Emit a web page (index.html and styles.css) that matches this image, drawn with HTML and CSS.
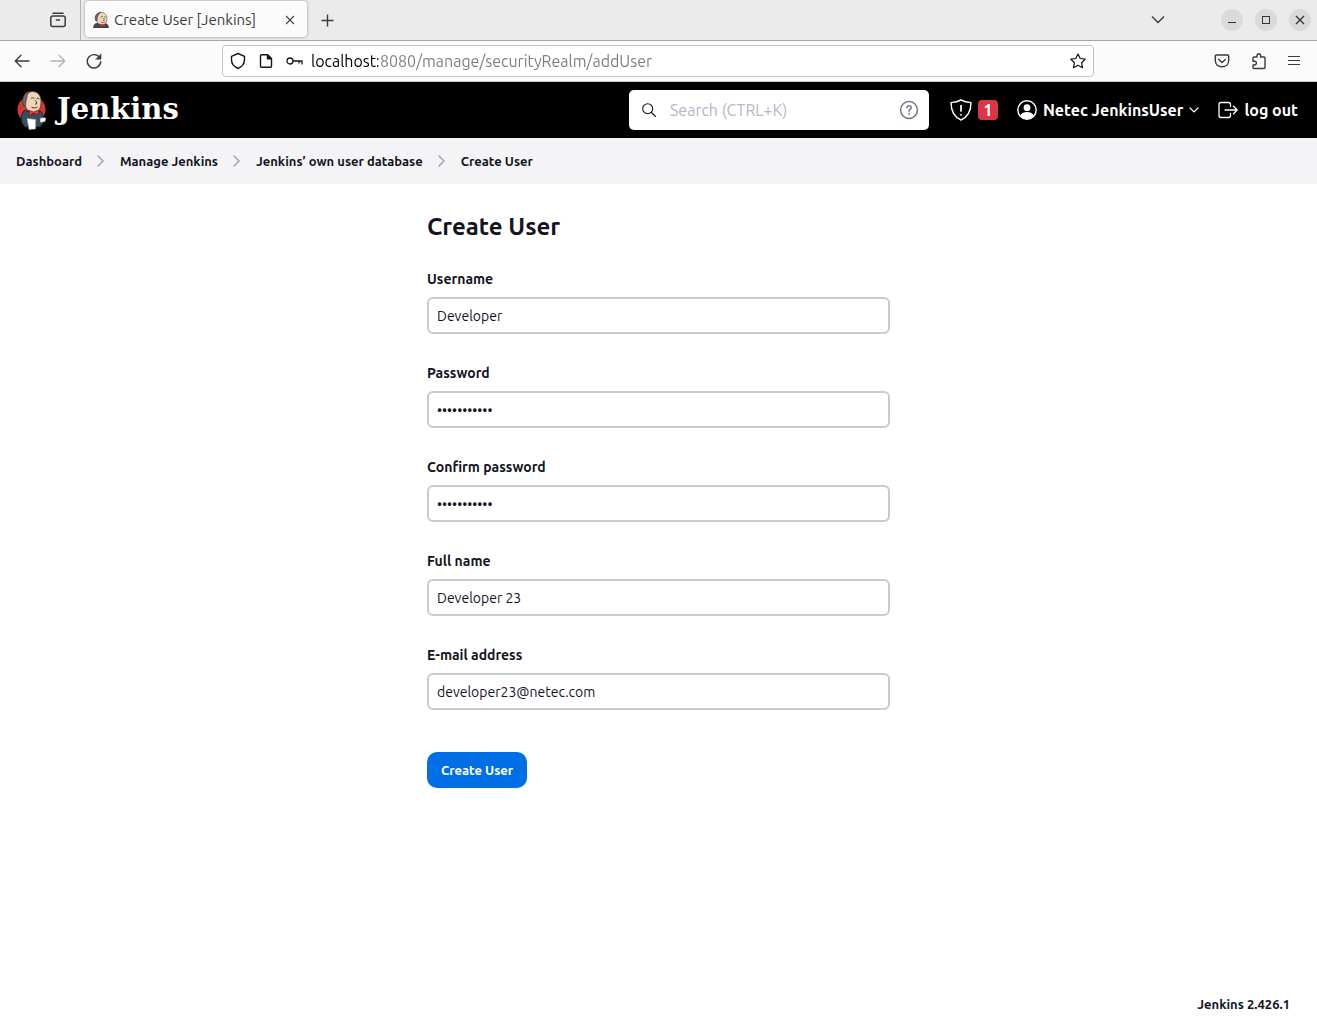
FILE: index.html
```html
<!DOCTYPE html>
<html lang="en">
<head>
<meta charset="utf-8">
<meta name="viewport" content="width=device-width, initial-scale=1">
<title>Create User [Jenkins]</title>
<link rel="stylesheet" href="styles.css">
</head>
<body>
<svg class="defs" aria-hidden="true">
  <symbol id="butler-bust" viewBox="0 0 32 32">
    <path d="M1 32c0-6 3-9 8-10l8 4 8-3c4 1 6 4 6 9z" fill="#335061" stroke="#1b2a33"/>
    <path d="M6 14C4 7 8 2 15 1c8-1 13 4 13 12 0 7-3 13-9 13-6 0-11-4-11-8-1 0-2-2-2-4z" fill="#f0d6b7" stroke="#4a3b33"/>
    <path d="M5 17C3 8 7 1 16 1c-4 2-6 4-6 7-2 2-1 6-2 10z" fill="#6d6b6d" stroke="#332c28"/>
    <path d="M15 10c2-2 4-1 5 0M22 10c2-1 3-1 4 1M21 12l2 4-3 1M16 20c3 2 6 1 8-1" fill="none" stroke="#4a3b33" stroke-width="1.3"/>
    <path d="M13 24l6 2 6-2v6l-6-2-6 3z" fill="#d33833" stroke="#811"/>
  </symbol>
  <symbol id="chevron-right" viewBox="0 0 12 12">
    <path d="M3 1l5 5-5 5" fill="none" stroke="currentColor" stroke-width="1.6" stroke-linecap="round" stroke-linejoin="round"/>
  </symbol>
</svg>

<div class="browser">
  <div class="tabstrip">
    <button class="icon-btn history" aria-label="Recent browsing">
      <svg width="18" height="18" viewBox="0 0 18 18" fill="none" stroke="#3b3b3e" stroke-width="1.5" stroke-linecap="round"><path d="M4 2.2h10"/><rect x="1.8" y="5" width="14.4" height="10.6" rx="2"/><path d="M7.500 9h3"/></svg>
    </button>
    <div class="tab">
      <svg class="favicon" width="16" height="16"><use href="#butler-bust"/></svg>
      <span class="tab-title">Create User [Jenkins]</span>
      <button class="icon-btn" aria-label="Close tab">
        <svg width="10" height="10" viewBox="0 0 10 10" stroke="#444" stroke-width="1.1"><path d="M1 1l8 8M9 1L1 9"/></svg>
      </button>
    </div>
    <button class="icon-btn new-tab" aria-label="New tab">
      <svg width="13" height="13" viewBox="0 0 13 13" stroke="#3b3b3e" stroke-width="1.4"><path d="M6.5 0.5v12M0.5 6.5h12"/></svg>
    </button>
    <div class="window-controls">
      <button class="icon-btn tab-list" aria-label="List all tabs">
        <svg width="14" height="8" viewBox="0 0 14 8" fill="none" stroke="#3b3b3e" stroke-width="1.4"><path d="M1 0.500l6 6 6-6"/></svg>
      </button>
      <button class="window-btn" aria-label="Minimize"><svg width="10" height="10" viewBox="0 0 10 10" stroke="#333"><path d="M1 7.5h8"/></svg></button>
      <button class="window-btn" aria-label="Maximize"><svg width="10" height="10" viewBox="0 0 10 10" fill="none" stroke="#333"><rect x="1.5" y="1.5" width="7" height="7"/></svg></button>
      <button class="window-btn" aria-label="Close"><svg width="10" height="10" viewBox="0 0 10 10" stroke="#333" stroke-width="1.3"><path d="M1 1l8 8M9 1L1 9"/></svg></button>
    </div>
  </div>

  <div class="toolbar">
    <div class="nav-buttons">
      <button class="icon-btn" aria-label="Back"><svg width="16" height="14" viewBox="0 0 16 14" fill="none" stroke="#3b3b3e" stroke-width="1.4" stroke-linecap="round" stroke-linejoin="round"><path d="M15 7H1.5M7 1.3L1.3 7 7 12.7"/></svg></button>
      <button class="icon-btn" aria-label="Forward" disabled><svg width="16" height="14" viewBox="0 0 16 14" fill="none" stroke="#b5b5b7" stroke-width="1.4" stroke-linecap="round" stroke-linejoin="round"><path d="M1 7h13.5M9 1.3L14.7 7 9 12.7"/></svg></button>
      <button class="icon-btn" aria-label="Reload"><svg width="16" height="16" viewBox="0 0 16 16" fill="none" stroke="#3b3b3e" stroke-width="1.4" stroke-linecap="round"><path d="M13.7 4.8A6.7 6.7 0 1 0 14.7 8.6"/><path d="M15 1.2v5h-5z" fill="#3b3b3e" stroke-width=".6"/></svg></button>
    </div>
    <div class="urlbar">
      <svg width="16" height="18" viewBox="0 0 16 18" fill="none" stroke="#15141a" stroke-width="1.4" stroke-linejoin="round"><path d="M8 1.5l6.5 2.800v3.500c0 4-2.500 7-6.500 8.700-4-1.700-6.500-4.700-6.500-8.700V4.300z"/></svg>
      <svg width="16" height="16" viewBox="0 0 16 16" fill="none" stroke="#15141a" stroke-width="1.4" stroke-linejoin="round"><path d="M3.500 1.700h6l4 4v7.600q0 1-1 1h-9q-1 0-1-1V2.700q0-1 1-1z"/><path d="M9.500 1.700v4h4z" fill="#15141a"/></svg>
      <svg width="18" height="12" viewBox="0 0 18 12" fill="none" stroke="#15141a" stroke-width="1.3"><circle cx="4" cy="6" r="3"/><path d="M7 6h9v3.500M13 6v2.500"/></svg>
      <input class="url" type="text" aria-label="Address" value="localhost:8080/manage/securityRealm/addUser">
      <button class="icon-btn" aria-label="Bookmark this page"><svg width="16" height="16" viewBox="0 0 16 16" fill="none" stroke="#15141a" stroke-width="1.2" stroke-linejoin="round"><path d="M8 .9l2.2 4.6 5 .7-3.600 3.500.9 5L8 12.300l-4.500 2.400.9-5L.8 6.200l5-.7z"/></svg></button>
    </div>
    <div class="tool-buttons">
      <button class="icon-btn" aria-label="Save to Pocket"><svg width="16" height="16" viewBox="0 0 16 16" fill="none" stroke="#3b3b3e" stroke-width="1.4" stroke-linecap="round" stroke-linejoin="round"><path d="M2.300 2h11.400q1 0 1 1v4.500c0 4-3 6.300-6.700 6.300S1.300 11.500 1.300 7.500V3q0-1 1-1z"/><path d="M4.700 6.500L8 9.500l3.300-3"/></svg></button>
      <button class="icon-btn" aria-label="Extensions"><svg width="16" height="18" viewBox="0 0 16 18" fill="none" stroke="#3b3b3e" stroke-width="1.4" stroke-linejoin="round"><path d="M2 8V6q0-1 1-1h3V3.500a1.800 1.800 0 0 1 3.600 0V5H13q1 0 1 1v9.500q0 1-1 1H3q-1 0-1-1V13h1.500a1.900 1.900 0 0 0 0-3.800H2z"/></svg></button>
      <button class="icon-btn" aria-label="Menu"><svg width="12" height="12" viewBox="0 0 12 12" stroke="#3b3b3e" stroke-width="1.2"><path d="M0 1.500h12M0 5.500h12M0 9.500h12"/></svg></button>
    </div>
  </div>
</div>

<header class="header">
  <a class="logo" href="#">
    <svg width="32" height="40" viewBox="0 0 32 40" aria-hidden="true">
      <ellipse cx="15.500" cy="19.500" rx="14" ry="13.500" fill="#d33833"/>
      <path d="M6 33c-1-5-1-10 3-13l8 4 7-3c3 2 4 6 3 12l-3 4H9z" fill="#335061" stroke="#16232b"/>
      <path d="M8 12C7 5 11 1.500 16 1.500c6 0 9 4 9 10 0 6-2 11-6.500 11S10 19 9.500 16C8.500 16 8 14 8 12z" fill="#f0d6b7" stroke="#4a3b33" stroke-width=".8"/>
      <path d="M7.500 16C5 8 8 1 16 1.200c-4 1.300-5 3.300-5 6-1 2-1 5-1.500 8.500z" fill="#6d6b6d" stroke="#332c28" stroke-width=".7"/>
      <path d="M15 8.500c1-1 2.500-1 3.500 0M20.500 9c1-1 2-1 3 0M19.500 10.500l1.500 3-2 .8M15.500 17c2 1.500 4.500 1 6 0" fill="none" stroke="#4a3b33"/>
      <path d="M13 20.500l4.500 1.500 5-2v5l-5-2-4 3z" fill="#ef3d3a" stroke="#7d1616" stroke-width=".7"/>
      <path d="M24 28l5-.5c1.500 1 1 4-1 4.500l-4 .5z" fill="#fff" stroke="#555" stroke-width=".6"/>
      <path d="M11 28.500l9 1c-1 3 0 6-.5 9.500l-6.500.5c-.5-4-1.500-7-2-11z" fill="#fff" stroke="#999" stroke-width=".6"/>
    </svg>
    <span class="wordmark">Jenkins</span>
  </a>
  <label class="search">
    <svg width="16" height="16" viewBox="0 0 16 16" fill="none" stroke="#14141f" stroke-width="1.1" stroke-linecap="round" aria-hidden="true"><circle cx="6.700" cy="6.700" r="5"/><path d="M10.500 10.500l4 4"/></svg>
    <input type="search" placeholder="Search (CTRL+K)" aria-label="Search">
    <svg width="20" height="20" viewBox="0 0 20 20" fill="none" stroke="#73738c" stroke-width="1.5" stroke-linecap="round" aria-hidden="true"><circle cx="10" cy="10" r="8.400"/><path d="M7.800 7.800c.1-1.500 1-2 2.200-2s2.200.7 2.200 1.900c0 1.700-2.200 1.700-2.200 3.500"/><circle cx="10" cy="14" r=".4" fill="#73738c" stroke-width="1"/></svg>
  </label>
  <nav class="account">
    <a class="alerts" href="#" aria-label="1 security warning">
      <svg width="22" height="22" viewBox="0 0 22 22" fill="none" stroke="#fff" stroke-width="1.4" stroke-linecap="round" stroke-linejoin="round"><path d="M11 1c3 1.500 6.500 2.300 10 2.600C21 11 19 17.500 11 21 3 17.500 1 11 1 3.600 4.500 3.300 8 2.500 11 1z"/><path d="M11 6.500v5.500M11 15.500v.3" stroke-width="1.700"/></svg>
      <span class="badge">1</span>
    </a>
    <a class="user" href="#">
      <svg width="20" height="20" viewBox="0 0 20 20"><circle cx="10" cy="10" r="9.200" fill="none" stroke="#fff" stroke-width="1.4"/><circle cx="10" cy="7.700" r="3.400" fill="#fff"/><path d="M3.300 15.500C4.500 13 7 12 10 12s5.500 1 6.700 3.500A9 9 0 0 1 10 19a9 9 0 0 1-6.700-3.500z" fill="#fff"/></svg>
      <span>Netec JenkinsUser</span>
      <svg width="10" height="6" viewBox="0 0 10 6" fill="none" stroke="#fff" stroke-width="1.2" stroke-linecap="round"><path d="M1 1l4 4 4-4"/></svg>
    </a>
    <a class="logout" href="#">
      <svg width="20" height="18" viewBox="0 0 20 18" fill="none" stroke="#fff" stroke-width="1.3" stroke-linecap="round" stroke-linejoin="round"><path d="M12.500 5.500V3.500q0-2-2-2H3q-2 0-2 2v11q0 2 2 2h7.500q2 0 2-2v-2M7 9h12M15.500 5.200L19.200 9l-3.700 3.800"/></svg>
      <span>log out</span>
    </a>
  </nav>
</header>

<nav class="breadcrumbs" aria-label="Breadcrumb">
  <a href="#">Dashboard</a>
  <svg width="12" height="12"><use href="#chevron-right"/></svg>
  <a href="#">Manage Jenkins</a>
  <svg width="12" height="12"><use href="#chevron-right"/></svg>
  <a href="#">Jenkins’ own user database</a>
  <svg width="12" height="12"><use href="#chevron-right"/></svg>
  <a href="#">Create User</a>
</nav>

<main class="main">
  <h1>Create User</h1>
  <form class="form">
    <div class="field"><label for="username">Username</label><input id="username" type="text" value="Developer"></div>
    <div class="field"><label for="password">Password</label><input id="password" type="password" value="developer23"></div>
    <div class="field"><label for="confirm">Confirm password</label><input id="confirm" type="password" value="developer23"></div>
    <div class="field"><label for="fullname">Full name</label><input id="fullname" type="text" value="Developer 23"></div>
    <div class="field"><label for="email">E-mail address</label><input id="email" type="text" value="developer23@netec.com"></div>
    <button class="submit" type="submit">Create User</button>
  </form>
</main>

<footer class="footer"><a href="#">Jenkins 2.426.1</a></footer>
</body>
</html>
```
FILE: styles.css
```css
*, *::before, *::after { box-sizing: border-box; }

body {
  margin: 0;
  min-height: 100vh;
  display: flex;
  flex-direction: column;
  background: #fff;
  color: #14141f;
  font-family: Ubuntu, "Noto Sans", "Open Sans", sans-serif;
  font-size: 14px;
  line-height: 20px;
}

a { color: inherit; text-decoration: none; }
button, input { font: inherit; color: inherit; }
svg { flex: none; display: block; }
.defs { position: absolute; width: 0; height: 0; }

.icon-btn {
  display: flex;
  padding: 0;
  border: 0;
  background: none;
}

/* Browser chrome */
.tabstrip {
  display: flex;
  align-items: center;
  height: 41px;
  background: #ebebeb;
  border-bottom: 1px solid #a5a5a7;
}
.history {
  align-self: stretch;
  align-items: center;
  width: 81px;
  padding-left: 49px;
  border-right: 1px solid #b4b4b6;
}
.tab {
  display: flex;
  align-items: center;
  width: 222px;
  height: 36px;
  margin: 0 14px 2px 4px;
  padding: 2px 12px 0 8px;
  border-radius: 4px;
  background: #fbfbfb;
  box-shadow: 0 0 3px rgba(0, 0, 0, .4);
  color: #3b3b3e;
  font-size: 15px;
}
.favicon { margin-right: 5px; }
.tab-title { flex: 1; white-space: nowrap; }
.window-controls {
  display: flex;
  align-items: center;
  gap: 12px;
  margin-left: auto;
  padding-right: 6px;
}
.tab-list { margin-right: 44px; }
.window-btn {
  display: grid;
  place-items: center;
  width: 22px;
  height: 22px;
  padding: 0;
  border: 0;
  border-radius: 50%;
  background: #dadada;
}
.toolbar {
  display: flex;
  align-items: center;
  height: 41px;
  padding: 0 17px 0 14px;
  background: #fbfbfb;
  border-bottom: 1px solid #ccc;
}
.nav-buttons { display: flex; align-items: center; gap: 20px; }
.urlbar {
  flex: 1;
  display: flex;
  align-items: center;
  gap: 12px;
  height: 32px;
  margin: 0 120px;
  padding: 0 7px;
  border: 1px solid #c4c4c6;
  border-radius: 4px;
  background: #fff;
}
.url {
  flex: 1;
  min-width: 0;
  margin-left: -5px;
  padding: 0;
  border: 0;
  font-size: 16px;
  color: transparent;
  background: linear-gradient(90deg, #000 67px, #7b7b80 67px);
  background-clip: text;
}
.tool-buttons { display: flex; align-items: center; gap: 21px; }

/* Jenkins header */
.header {
  display: flex;
  align-items: center;
  height: 56px;
  padding: 0 19px 0 16px;
  background: #000;
  color: #fff;
}
.logo { display: flex; align-items: center; gap: 9px; }
.wordmark {
  padding-bottom: 2px;
  font: bold 29px/36px "DejaVu Serif", serif;
}
.search {
  display: flex;
  align-items: center;
  width: 300px;
  height: 40px;
  margin-left: auto;
  padding: 0 10px 0 12px;
  border-radius: 5px;
  background: #fff;
}
.search input {
  flex: 1;
  min-width: 0;
  padding: 0 0 0 13px;
  border: 0;
  background: none;
  color: #14141f;
  font-size: 16px;
}
.search input::placeholder { color: #b6b6c8; }
.account {
  display: flex;
  align-items: center;
  margin-left: 21px;
  gap: 19px;
  font-size: 16px;
  font-weight: 700;
}
.account a { display: flex; align-items: center; gap: 6px; white-space: nowrap; }
.badge {
  width: 20px;
  border-radius: 4px;
  background: #dc3545;
  text-align: center;
}

.breadcrumbs {
  display: flex;
  align-items: center;
  gap: 13px;
  height: 46px;
  padding: 0 16px;
  background: #f4f4f7;
  font-size: 13px;
  font-weight: 600;
}
.breadcrumbs svg { color: #a5a5b8; }

/* Form */
.main {
  width: 100%;
  max-width: 463px;
  margin: 0 auto;
  padding-top: 27px;
}
h1 { margin: 0; font-size: 24px; line-height: 32px; font-weight: 700; }
.form { padding-top: 25px; }
.field { margin-bottom: 28px; }
.field label { display: block; margin-bottom: 7px; font-weight: 600; line-height: 22px; }
.field input {
  display: block;
  width: 100%;
  height: 37px;
  padding: 0 8px;
  border: 2px solid #c3ccd1;
  border-radius: 6px;
  background: #fff;
}
.submit {
  display: block;
  height: 36px;
  margin-top: 42px;
  padding: 0 14px;
  border: 0;
  border-radius: 10px;
  background: #006fe6;
  color: #fff;
  font-size: 13px;
  font-weight: 700;
}

.footer {
  margin-top: auto;
  padding: 0 27px 18px;
  text-align: right;
  font-size: 13px;
  font-weight: 600;
}
```
